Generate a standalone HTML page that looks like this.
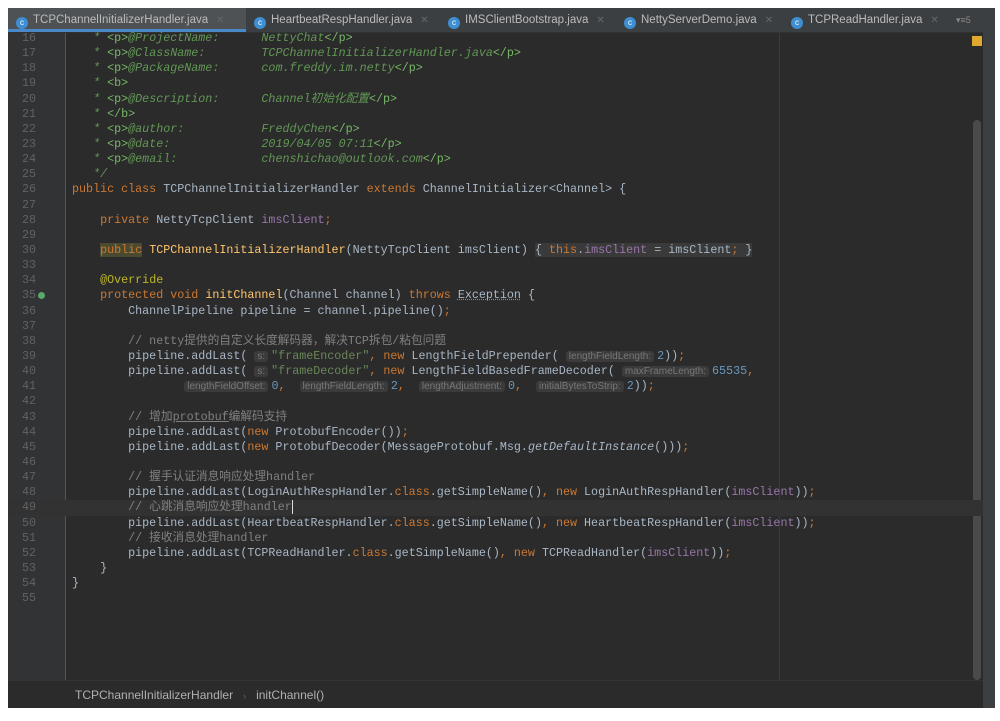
<!DOCTYPE html>
<html><head><meta charset="utf-8"><style>
body{margin:0;width:1000px;height:721px;background:#fff;position:relative;overflow:hidden}
#frame{position:absolute;left:8px;top:8px;width:975px;height:700px;background:#2b2b2b;overflow:hidden}
#tabs{position:absolute;left:0;top:0;width:975px;height:24px;background:#3c3f41;border-bottom:1px solid #323232}
.tab{position:absolute;top:0;height:24px;font:11.5px "Liberation Sans",sans-serif;color:#bbbbbb;line-height:24px;white-space:nowrap}
.tab .ic{display:inline-block;width:12px;height:12px;border-radius:50%;background:#3d8fd1;color:#fff;font-size:8px;line-height:12px;text-align:center;vertical-align:-2px;margin-right:5px}
.tab .x{color:#666;margin-left:8px;font-size:10px}
.tab.active{background:#4e5254;border-bottom:3px solid #4a88c7;height:21px}
#gutter{position:absolute;left:0;top:25px;width:57px;height:650px;background:#313335;border-right:1px solid #555}
#code{position:absolute;left:0;top:23px;width:975px;font:11.7px "Liberation Mono","Noto Sans CJK SC",monospace;color:#a9b7c6}
.r{height:15.15px;line-height:15.15px;position:relative;overflow:visible}
.n{position:absolute;left:6px;width:22px;text-align:right;color:#606366}
.c{position:absolute;left:50px;white-space:pre}
.k{color:#cc7832}.s{color:#6a8759}.cm{color:#808080}.jd{color:#629755;font-style:italic}.jt{color:#77b767;font-style:normal}
.num{color:#6897bb}.f{color:#9876aa}.an{color:#bbb529}.m{color:#ffc66d}.it{font-style:italic}
.h{font:10px "Liberation Sans",sans-serif;color:#787878;background:#3b3b3b;border-radius:3px;padding:0 3px;margin-right:3px}
.fold{background:#3a3a3a}
#margin{position:absolute;left:771px;top:25px;width:1px;height:650px;background:#3c3c3c}
#bc{position:absolute;left:0;top:672px;width:975px;height:28px;background:#2b2b2b;border-top:1px solid #333;font:12px "Liberation Sans",sans-serif;color:#b0b0b0;line-height:28px}
#strip{position:absolute;left:983px;top:8px;width:12px;height:700px;background:#3c3f41}
</style></head><body>
<div id="frame">
<div id="tabs">
<div class="tab active" style="left:0;width:230px;padding-left:8px"><span class="ic">c</span>TCPChannelInitializerHandler.java<span class="x">✕</span></div>
<div class="tab" style="left:238px;padding-left:8px"><span class="ic">c</span>HeartbeatRespHandler.java<span class="x">✕</span></div>
<div class="tab" style="left:432px;padding-left:8px"><span class="ic">c</span>IMSClientBootstrap.java<span class="x">✕</span></div>
<div class="tab" style="left:608px;padding-left:8px"><span class="ic">c</span>NettyServerDemo.java<span class="x">✕</span></div>
<div class="tab" style="left:775px;padding-left:8px"><span class="ic">c</span>TCPReadHandler.java<span class="x">✕</span></div>
<div class="tab" style="left:948px;color:#888;font-size:9px">▾≡5</div>
</div>
<div id="gutter"></div>
<div id="margin"></div>
<div style="position:absolute;left:964px;top:28px;width:10px;height:10px;background:#e0a82e"></div>
<div style="position:absolute;left:965px;top:112px;width:8px;height:560px;background:#4a4a4a;border-radius:4px"></div>
<div id="code"><div class="r"><span class="n">16</span><span class="c jd">     * <span class="jt">&lt;p&gt;</span>@ProjectName:      NettyChat<span class="jt">&lt;/p&gt;</span></span></div><div class="r"><span class="n">17</span><span class="c jd">     * <span class="jt">&lt;p&gt;</span>@ClassName:        TCPChannelInitializerHandler.java<span class="jt">&lt;/p&gt;</span></span></div><div class="r"><span class="n">18</span><span class="c jd">     * <span class="jt">&lt;p&gt;</span>@PackageName:      com.freddy.im.netty<span class="jt">&lt;/p&gt;</span></span></div><div class="r"><span class="n">19</span><span class="c jd">     * <span class="jt">&lt;b&gt;</span></span></div><div class="r"><span class="n">20</span><span class="c jd">     * <span class="jt">&lt;p&gt;</span>@Description:      Channel初始化配置<span class="jt">&lt;/p&gt;</span></span></div><div class="r"><span class="n">21</span><span class="c jd">     * <span class="jt">&lt;/b&gt;</span></span></div><div class="r"><span class="n">22</span><span class="c jd">     * <span class="jt">&lt;p&gt;</span>@author:           FreddyChen<span class="jt">&lt;/p&gt;</span></span></div><div class="r"><span class="n">23</span><span class="c jd">     * <span class="jt">&lt;p&gt;</span>@date:             2019/04/05 07:11<span class="jt">&lt;/p&gt;</span></span></div><div class="r"><span class="n">24</span><span class="c jd">     * <span class="jt">&lt;p&gt;</span>@email:            chenshichao@outlook.com<span class="jt">&lt;/p&gt;</span></span></div><div class="r"><span class="n">25</span><span class="c jd">     */</span></div><div class="r"><span class="n">26</span><span class="c">  <span class="k">public class</span> TCPChannelInitializerHandler <span class="k">extends</span> ChannelInitializer&lt;Channel&gt; {</span></div><div class="r"><span class="n">27</span></div><div class="r"><span class="n">28</span><span class="c">      <span class="k">private</span> NettyTcpClient <span class="f">imsClient</span><span class="k">;</span></span></div><div class="r"><span class="n">29</span></div><div class="r"><span class="n">30</span><span class="c">      <span class="k" style="background:#4a4a30">public</span> <span class="m">TCPChannelInitializerHandler</span>(NettyTcpClient imsClient) <span class="fold">{ <span class="k">this</span>.<span class="f">imsClient</span> = imsClient<span class="k">;</span> }</span></span></div><div class="r"><span class="n">33</span></div><div class="r"><span class="n">34</span><span class="c">      <span class="an">@Override</span></span></div><div class="r"><span class="n">35</span><span style="position:absolute;left:30px;top:4px;width:7px;height:7px;border-radius:50%;background:#59a869"></span><span class="c">      <span class="k">protected void</span> <span class="m">initChannel</span>(Channel channel) <span class="k">throws</span> <span style="text-decoration:underline dotted #888">Exception</span> {</span></div><div class="r"><span class="n">36</span><span class="c">          ChannelPipeline pipeline = channel.pipeline()<span class="k">;</span></span></div><div class="r"><span class="n">37</span></div><div class="r"><span class="n">38</span><span class="c cm">          // netty提供的自定义长度解码器，解决TCP拆包/粘包问题</span></div><div class="r"><span class="n">39</span><span class="c">          pipeline.addLast( <span class="h">s:</span><span class="s">"frameEncoder"</span><span class="k">, new</span> LengthFieldPrepender( <span class="h">lengthFieldLength:</span><span class="num">2</span>))<span class="k">;</span></span></div><div class="r"><span class="n">40</span><span class="c">          pipeline.addLast( <span class="h">s:</span><span class="s">"frameDecoder"</span><span class="k">, new</span> LengthFieldBasedFrameDecoder( <span class="h">maxFrameLength:</span><span class="num">65535</span><span class="k">,</span></span></div><div class="r"><span class="n">41</span><span class="c">                  <span class="h">lengthFieldOffset:</span><span class="num">0</span><span class="k">,</span>  <span class="h">lengthFieldLength:</span><span class="num">2</span><span class="k">,</span>  <span class="h">lengthAdjustment:</span><span class="num">0</span><span class="k">,</span>  <span class="h">initialBytesToStrip:</span><span class="num">2</span>))<span class="k">;</span></span></div><div class="r"><span class="n">42</span></div><div class="r"><span class="n">43</span><span class="c cm">          // 增加<span style="text-decoration:underline">protobuf</span>编解码支持</span></div><div class="r"><span class="n">44</span><span class="c">          pipeline.addLast(<span class="k">new</span> ProtobufEncoder())<span class="k">;</span></span></div><div class="r"><span class="n">45</span><span class="c">          pipeline.addLast(<span class="k">new</span> ProtobufDecoder(MessageProtobuf.Msg.<span class="it">getDefaultInstance</span>()))<span class="k">;</span></span></div><div class="r"><span class="n">46</span></div><div class="r"><span class="n">47</span><span class="c cm">          // 握手认证消息响应处理handler</span></div><div class="r"><span class="n">48</span><span class="c">          pipeline.addLast(LoginAuthRespHandler.<span class="k">class</span>.getSimpleName()<span class="k">, new</span> LoginAuthRespHandler(<span class="f">imsClient</span>))<span class="k">;</span></span></div><div class="r" style="background:#323232"><span class="n">49</span><span class="c cm">          // 心跳消息响应处理handler<span style="border-left:1px solid #ddd"></span></span></div><div class="r"><span class="n">50</span><span class="c">          pipeline.addLast(HeartbeatRespHandler.<span class="k">class</span>.getSimpleName()<span class="k">, new</span> HeartbeatRespHandler(<span class="f">imsClient</span>))<span class="k">;</span></span></div><div class="r"><span class="n">51</span><span class="c cm">          // 接收消息处理handler</span></div><div class="r"><span class="n">52</span><span class="c">          pipeline.addLast(TCPReadHandler.<span class="k">class</span>.getSimpleName()<span class="k">, new</span> TCPReadHandler(<span class="f">imsClient</span>))<span class="k">;</span></span></div><div class="r"><span class="n">53</span><span class="c">      }</span></div><div class="r"><span class="n">54</span><span class="c">  }</span></div><div class="r"><span class="n">55</span></div></div>
<div id="bc"><span style="margin-left:67px">TCPChannelInitializerHandler</span><span style="color:#666;margin:0 10px;font-size:9px">›</span>initChannel()</div>
</div>
<div id="strip"></div>
</body></html>
